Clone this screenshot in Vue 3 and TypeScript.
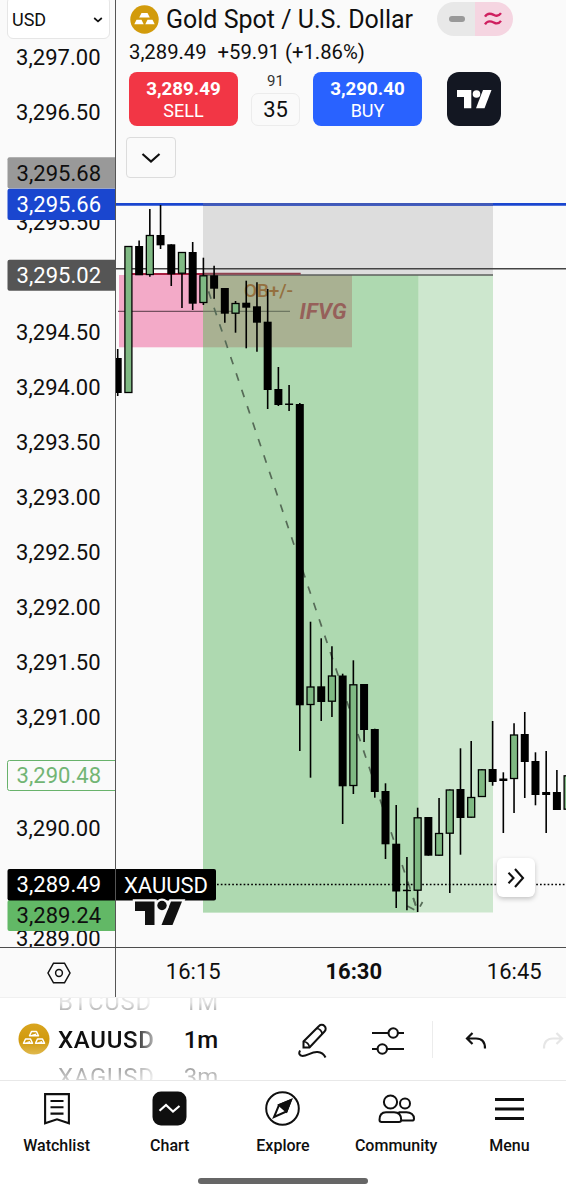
<script setup lang="ts">
interface Candle { x: number; high: number; low: number; top: number; bottom: number; up: boolean }
interface Tag { label: string; y: number; h: number; fill: string; ink: string; stroke?: string }

// high, low, body top, body bottom, direction (1 = rising)
const raw: [number, number, number, number, number][] = [
  [349, 396, 358, 393, 0], [246, 393, 246, 393, 1], [240.5, 275, 246, 275.3, 0], [209, 276.7, 235, 275, 1],
  [205, 249, 235, 245.3, 0], [244.3, 286, 244.3, 274.3, 0], [252, 308, 252, 273.7, 1], [242, 310, 252, 303.7, 0],
  [257.7, 305, 275.3, 303, 1], [265.7, 298.7, 275.3, 288.7, 0], [288, 322.7, 288, 313.7, 0], [301, 332.7, 303, 313.7, 1],
  [280.7, 348.3, 302.7, 307.7, 0], [282.3, 351.7, 306.3, 322.7, 0], [289, 409, 321.7, 390, 0], [367, 406, 389, 405, 0],
  [385, 411, 403.5, 405, 0], [403, 751, 404, 705.3, 0], [621.7, 777.7, 686.5, 705, 1], [638.3, 721, 686.3, 702, 0],
  [646.3, 717, 675.5, 701.7, 1], [673.7, 824, 675.5, 786.3, 0], [660.3, 794, 684.3, 786, 1], [684, 742, 684, 730, 0],
  [728.7, 797.7, 729, 792, 0], [783.3, 859, 791, 844.3, 0], [805, 908, 843.7, 891.5, 0], [857, 910.3, 889.7, 891.2, 0],
  [807.7, 912, 817.3, 890.7, 1], [817, 855.7, 817, 855.7, 0], [798, 855.7, 833, 855.7, 1], [789.5, 893, 789.5, 833.7, 1],
  [748.3, 854.7, 789, 818, 0], [741, 817.7, 797, 817.7, 1], [769.3, 797, 769.3, 797, 1], [721, 785.7, 769, 782, 0],
  [772.3, 833, 778.5, 781, 0], [723.3, 813, 734.5, 779, 1], [712, 798, 734, 762, 0], [752.3, 805.3, 761, 795, 0],
  [751, 833, 792, 795, 0], [770, 810, 792, 810, 0], [775.3, 809.7, 775.3, 809.7, 1],
]
const candles: Candle[] = raw.map((r, i) => ({
  x: 117.7 + 10.712 * i, high: r[0], low: r[1], top: r[2], bottom: r[3], up: r[4] === 1,
}))

const gridPrices = [3297, 3296.5, 3295.5, 3294.5, 3294, 3293.5, 3293, 3292.5, 3292, 3291.5, 3291, 3290, 3289]
const yOf = (price: number): number => 57 + (3297 - price) * 110.1
const format = (price: number): string => price.toLocaleString('en-US', { minimumFractionDigits: 2 })

const tags: Tag[] = [
  { label: '3,295.68', y: 157.3, h: 31.2, fill: '#999999', ink: '#0f0f0f' },
  { label: '3,295.66', y: 188.7, h: 31.3, fill: '#1a46cf', ink: '#ffffff' },
  { label: '3,295.02', y: 259.7, h: 31, fill: '#555555', ink: '#ffffff' },
  { label: '3,290.48', y: 760.5, h: 30, fill: '#fafafa', ink: '#72b574', stroke: '#68b26b' },
  { label: '3,289.24', y: 900, h: 31, fill: '#62b866', ink: '#0f0f0f' },
  { label: '3,289.49', y: 869, h: 31.5, fill: '#000000', ink: '#ffffff' },
]
const times = [
  { label: '16:15', strong: false }, { label: '16:30', strong: true }, { label: '16:45', strong: false },
]
</script>

<template>
  <main class="app">
    <section class="chart">
      <svg class="plot" width="566" height="947" viewBox="0 0 566 947">
        <defs>
          <clipPath id="pane"><rect x="116" y="0" width="450" height="947" /></clipPath>
        </defs>
        <g clip-path="url(#pane)">
          <rect x="203" y="204" width="290" height="71" fill="#dddddd" />
          <rect x="203" y="275" width="290" height="637.5" fill="#cde7ce" />
          <rect x="203" y="275" width="215.3" height="637.5" fill="#aed9b0" />
          <rect x="119" y="275" width="84" height="72.3" fill="#f3aac8" />
          <rect x="203" y="275" width="149" height="72.3" fill="#a9b192" />
          <path d="M116 204.4H566" stroke="#1a46cf" stroke-width="2.7" />
          <path d="M203 204.4H493" stroke="#4059b8" stroke-width="2.7" />
          <path d="M116 268.8H566" stroke="#444" stroke-width="1.6" />
          <path d="M203 275H493" stroke="#5c5f5c" stroke-width="1.5" />
          <path d="M132 274H203" stroke="#a81f40" stroke-width="2.2" />
          <path d="M203 273.7H300.7" stroke="#8f4350" stroke-width="2" />
          <path d="M118 311.4H203" stroke="#74505f" stroke-width="1.2" />
          <path d="M203 311.4H290" stroke="#6e7762" stroke-width="1.2" />
          <text x="244" y="296.5" class="zone-label ob" textLength="49">OB+/-</text>
          <text x="299.5" y="318.5" class="zone-label ifvg" textLength="47">IFVG</text>
          <path d="M203 275L418 912" stroke="#566b57" stroke-width="1.7" stroke-dasharray="7.8 9.5" />
          <path d="M407.3 906L414.3 909.7M413.3 898.3L415.7 905.7M422.5 902L420 906.7" stroke="#566b57" stroke-width="1.7" />
          <path d="M217 884.5H566" stroke="#000" stroke-width="1.6" stroke-dasharray="1.7 2.1" />
          <g v-for="(c, i) in candles" :key="i">
            <path :d="`M${c.x} ${c.high}V${c.low}`" stroke="#000" stroke-width="1.6" />
            <rect v-if="c.up" :x="c.x - 3.5" :y="c.top + .5" width="7" :height="c.bottom - c.top - 1" fill="#7fb983" stroke="#000" stroke-width="1.3" />
            <rect v-else :x="c.x - 4" :y="c.top" width="8" :height="c.bottom - c.top" />
          </g>
        </g>
        <g class="scale">
          <text v-for="p in gridPrices" :key="p" x="16" :y="yOf(p) + 7.8" textLength="84.5">{{ format(p) }}</text>
          <g v-for="t in tags" :key="t.label">
            <path :d="`M115.5 ${t.y}H9.5a2 2 0 0 0-2 2v${t.h - 4}a2 2 0 0 0 2 2H115.5z`" :fill="t.fill" :stroke="t.stroke ?? 'none'" />
            <text x="16.5" :y="t.y + t.h / 2 + 7.6" textLength="84.5" :fill="t.ink">{{ t.label }}</text>
          </g>
        </g>
        <path d="M116 869H214a2 2 0 0 1 2 2v27.500a2 2 0 0 1-2 2H116z" />
        <path d="M115.500 0V947" stroke="#555" />
        <text x="124" y="893" class="symbol" textLength="84">XAUUSD</text>
        <g transform="translate(135 901.5)" fill="#111" stroke="#fafafa" stroke-width="4.500" paint-order="stroke" stroke-linejoin="miter">
          <path d="M0 0H19.500V23.500H10V9.500H0z" />
          <path d="M36 0H47L37.500 23.500H26.500z" />
          <circle cx="27" cy="4" r="4.700" />
        </g>
      </svg>

      <div class="currency">
        <span>USD</span>
        <svg width="10" height="6" viewBox="0 0 10 6"><path d="M1.200 1L5 4.300L8.800 1" fill="none" stroke="#111" stroke-width="1.700" /></svg>
      </div>

      <div class="legend">
        <div class="title-row">
          <svg width="29" height="29" viewBox="0 0 29 29">
            <circle cx="14.500" cy="14.500" r="14.200" fill="#d29b0b" />
            <path d="M11.500 8h6l2.300 4.600h-10.600zM6.500 14.800h5l2.200 4.400h-9.400zM17.500 14.800h5l2.200 4.400h-9.400z" fill="#fff" />
          </svg>
          <h1>Gold Spot / U.S. Dollar</h1>
          <div class="pills">
            <span class="pill off"><i></i></span>
            <span class="pill on">
              <svg width="18" height="14" viewBox="0 0 18 14"><path d="M1 4.700C4-.3 8 2 10 3s5 1 7-1.800M1 12.300c3-5 7-2.700 9-1.700s5 1 7-1.800" fill="none" stroke="#cf1f5f" stroke-width="2.300" /></svg>
            </span>
          </div>
        </div>
        <div class="quote"><span>3,289.49</span><span>+59.91 (+1.86%)</span></div>
        <div class="trade-row">
          <button class="trade sell"><b>3,289.49</b><span>SELL</span></button>
          <div class="spread"><small>91</small><span>35</span></div>
          <button class="trade buy"><b>3,290.40</b><span>BUY</span></button>
          <div class="badge">
            <svg width="35" height="19" viewBox="0 0 35 19" fill="#fff">
              <path d="M0 0H14.300V18.300H7V7H0z" /><circle cx="19.500" cy="4" r="3.800" /><path d="M26 0H34.500L27.500 18.300H19z" />
            </svg>
          </div>
        </div>
        <button class="collapse">
          <svg width="20" height="12" viewBox="0 0 20 12"><path d="M1.500 2L10 9.500L18.500 2" fill="none" stroke="#0f0f0f" stroke-width="2.200" /></svg>
        </button>
      </div>

      <button class="jump">
        <svg width="18" height="20" viewBox="0 0 18 20"><path d="M1.500 4.800L6.500 10L1.500 15.200M8 1L16 10L8 19" fill="none" stroke="#111" stroke-width="2.100" /></svg>
      </button>

      <div class="time-axis">
        <div class="corner">
          <svg width="24" height="22" viewBox="0 0 24 22" fill="none" stroke="#111" stroke-width="1.500"><path d="M6.500 1.200H17.500L23 11L17.500 20.800H6.500L1 11z" /><circle cx="12" cy="11" r="3.400" /></svg>
        </div>
        <div class="times"><span v-for="t in times" :key="t.label" :class="{ strong: t.strong }">{{ t.label }}</span></div>
      </div>
    </section>

    <section class="toolbar">
      <svg class="coin" width="32" height="32" viewBox="0 0 32 32">
        <defs><linearGradient id="gold" x1="0" y1="0" x2="0" y2="1"><stop offset="0" stop-color="#d9a520" /><stop offset=".55" stop-color="#d0990c" /><stop offset="1" stop-color="#e0b94e" /></linearGradient></defs>
        <circle cx="16" cy="16" r="15.500" fill="url(#gold)" />
        <path d="M13.500 8.500h5l2 4.300h-9zM7.500 16h5l2 4.300h-9zM19.500 16h5l2 4.300h-9z" fill="#d0990c" stroke="#fff" stroke-width="1.500" stroke-linejoin="round" />
        <path d="M13 12l5-1.500.500 2zM7 19.500l5-1.500.500 2zM19 19.500l5-1.500.500 2z" fill="#fff" />
      </svg>
      <div class="wheel symbols"><span>BTCUSD</span><b>XAUUSD</b><span>XAGUSD</span></div>
      <div class="wheel frames"><span>1M</span><b>1m</b><span>3m</span></div>
      <svg class="tool draw" width="30" height="37" viewBox="0 0 30 37" fill="none" stroke="#111" stroke-width="2">
        <path d="M5.500 25.500V19.500L21 4a3.800 3.800 0 0 1 5.500 0a3.800 3.800 0 0 1 0 5.500L11.500 25.500z" /><path d="M18.500 6.500C21.500 6.500 24 9 24 12M5.500 19.500C9 20 11 22 11.500 25.500" stroke-width="1.700" />
        <path d="M2.200 28.500c-1.800 2.500-1 5.500 2.300 5.500c5 0 9-4.500 15-4c4.500.4 6.500 2 8 5.500" />
      </svg>
      <svg class="tool tune" width="32" height="28" viewBox="0 0 32 28" fill="none" stroke="#111" stroke-width="2.100">
        <path d="M0 6H16.500M26 6H32M0 22H5.500M15 22H32" /><circle cx="21.200" cy="6" r="4.700" /><circle cx="10.300" cy="22" r="4.700" />
      </svg>
      <i class="rule"></i>
      <svg class="tool undo" width="22" height="18" viewBox="0 0 22 18" fill="none" stroke="#111" stroke-width="2.200"><path d="M7.500 1L2 6.500L7.500 12M2 6.500H11c6 0 9 3.500 9 10" /></svg>
      <svg class="tool redo" width="22" height="18" viewBox="0 0 22 18" fill="none" stroke="#e6e6e6" stroke-width="2.200"><path d="M14.500 1L20 6.500L14.500 12M20 6.500H11c-6 0-9 3.500-9 10" /></svg>
    </section>

    <nav class="tabs">
      <a>
        <span class="icon"><svg width="26" height="32" viewBox="0 0 26 32" fill="none" stroke="#0f0f0f" stroke-width="2.100"><path d="M1.100 1.100H24.900V30.300L13 26.300L1.100 30.300z" /><path d="M6.500 8H19.500M6.500 14.300H19.500M6.500 20.600H19.500" /></svg></span>
        Watchlist
      </a>
      <a>
        <span class="icon"><svg width="35" height="35" viewBox="0 0 35 35"><rect x=".5" y=".5" width="34" height="34" rx="8.500" fill="#0f0f0f" /><path d="M7.500 19.800L14 14L21 20.500L27.500 15" fill="none" stroke="#fff" stroke-width="2.200" /></svg></span>
        Chart
      </a>
      <a>
        <span class="icon"><svg width="35" height="35" viewBox="0 0 35 35" fill="none" stroke="#0f0f0f" stroke-width="2"><circle cx="17.500" cy="17.500" r="16.300" /><path d="M26 9L21.500 20.500L9 26L14 14z" /><path d="M26 9L21.500 20.500L14 14z" fill="#0f0f0f" /></svg></span>
        Explore
      </a>
      <a>
        <span class="icon"><svg width="37" height="30" viewBox="0 0 37 30" fill="none" stroke="#0f0f0f" stroke-width="2"><circle cx="12.500" cy="8" r="6.600" /><circle cx="27" cy="9.500" r="5" /><path d="M1.500 25.800C1.500 20 4.500 18.200 8 18.200H16c4 0 7.200 2.300 7.200 7.600q0 2.200-2.200 2.200H3.700q-2.200 0-2.200-2.200zM20.500 18.200H28.500c4.500 0 7.500 2.800 7.500 6.200q0 2.200-2.200 2.200H23" /></svg></span>
        Community
      </a>
      <a>
        <span class="icon"><svg width="29" height="24" viewBox="0 0 29 24"><path d="M0 2.500H29M0 12H29M0 21.500H29" stroke="#0f0f0f" stroke-width="2.900" /></svg></span>
        Menu
      </a>
    </nav>
    <div class="home-bar"></div>
  </main>
</template>

<style>
html, body { margin: 0; background: #fff; }
</style>
<style scoped>
.app { width: 566px; height: 1200px; overflow: hidden; position: relative; background: #fff; color: #0f0f0f; font-family: Roboto, "Liberation Sans", sans-serif; display: flex; flex-direction: column; }
.app svg { display: block; flex: none; }
button { font: inherit; padding: 0; box-sizing: border-box; }
.chart { position: relative; height: 998px; flex: none; background: #fafafa; }
.scale { font-size: 22px; fill: #0f0f0f; }
.symbol { font-size: 22px; fill: #fff; }
.zone-label { font-weight: 500; }
.ob { font-size: 19px; fill: #94703f; }
.ifvg { font-size: 22px; font-weight: 700; font-style: italic; fill: #96605a; }
.currency { position: absolute; left: 7px; top: -4px; width: 103px; height: 43px; box-sizing: border-box; border: 1px solid #e6e6e6; border-radius: 6px; background: #fff; display: flex; align-items: center; justify-content: space-between; padding: 4px 6px 0 5px; font-size: 18px; }
.currency span { margin-left: -1px; }
.legend { position: absolute; left: 126px; top: 1px; width: 440px; }
.title-row { display: flex; align-items: center; height: 36px; padding-left: 4px; }
h1 { margin: 0 0 0 7px; font-size: 25px; font-weight: 400; width: 249px; white-space: nowrap; line-height: 37px; }
.pills { display: flex; margin-left: 22px; }
.pill { width: 38px; height: 34px; display: flex; align-items: center; justify-content: center; }
.off { background: #e8e8e8; border-radius: 17px 0 0 17px; }
.off i { width: 16px; height: 6px; border-radius: 3px; background: #999; margin-left: 2px; }
.on { background: #f5d5e1; border-radius: 0 17px 17px 0; }
.on svg { margin-right: 3px; }
.quote { display: flex; gap: 11px; height: 30px; line-height: 30px; padding-left: 3px; font-size: 20.250px; white-space: nowrap; }
.trade-row { display: flex; height: 54px; margin: 5px 0 0 3px; }
.trade { width: 109px; height: 54px; border: 0; border-radius: 8px; color: #fff; display: flex; flex-direction: column; align-items: center; justify-content: center; padding-top: 2px; font-size: 18px; line-height: 21px; }
.trade b { font-size: 18.800px; font-weight: 700; }
.sell { background: #f23645; }
.buy { background: #2962ff; }
.spread { width: 49px; margin: 0 13px; display: flex; flex-direction: column; align-items: center; }
.spread small { font-size: 15px; line-height: 18px; height: 21px; color: #333; }
.spread span { box-sizing: border-box; width: 49px; height: 33px; border: 1px solid #ececec; border-radius: 7px; text-align: center; font-size: 22px; line-height: 31px; }
.badge { width: 54px; height: 54px; border-radius: 12px; background: #131722; margin-left: 25px; display: flex; align-items: center; justify-content: center; }
.collapse { display: flex; align-items: center; justify-content: center; width: 50px; height: 41px; margin-top: 11px; border: 1px solid #dcdcdc; border-radius: 4px; background: #fafafa; }
.jump { position: absolute; left: 497px; top: 858px; width: 38px; height: 39px; border: 0; border-radius: 6px; background: #fff; box-shadow: 0 2px 5px rgba(0,0,0,.22); display: flex; align-items: center; justify-content: center; }
.time-axis { position: absolute; left: 0; right: 0; top: 947px; height: 51px; display: flex; box-sizing: border-box; border-top: 1px solid #4d4d4d; border-bottom: 1px solid #f0f0f0; overflow: hidden; }
.corner { flex: none; width: 116px; border-right: 1px solid #555; display: flex; align-items: center; justify-content: center; padding-left: 3px; box-sizing: border-box; }
.times { width: 482px; flex: none; display: flex; margin-left: -3px; font-size: 22px; line-height: 48px; }
.times span { width: 160.500px; text-align: center; }
.strong { font-weight: 700; }
.toolbar { height: 83px; flex: none; box-sizing: border-box; border-bottom: 1px solid #e8e8e8; display: flex; align-items: center; padding-left: 18px; overflow: hidden; }
.wheel { display: flex; flex-direction: column; justify-content: center; height: 82px; box-sizing: border-box; padding-top: 3px; font-size: 24px; line-height: 37.500px; color: #a8a8a8; overflow: hidden; }
.wheel b { font-weight: 500; color: #0f0f0f; }
.wheel span, .wheel b { flex: none; }
.wheel span:first-child { background: linear-gradient(#e4e4e4 48%, #9c9c9c 82%); -webkit-background-clip: text; background-clip: text; color: transparent; }
.wheel span:last-child { background: linear-gradient(#9c9c9c 20%, #e0e0e0 65%); -webkit-background-clip: text; background-clip: text; color: transparent; }
.symbols { width: 98px; margin-left: 8px; letter-spacing: .7px; -webkit-mask-image: linear-gradient(90deg, #000 76%, rgba(0,0,0,.3) 98%); mask-image: linear-gradient(90deg, #000 76%, rgba(0,0,0,.3) 98%); }
.frames { width: 40px; margin-left: 25px; text-align: center; }
.tool { margin-top: 3px; }
.draw { margin-left: 77px; }
.tune { margin-left: 44px; }
.rule { width: 1px; height: 37px; margin-left: 28px; background: #ececec; }
.undo { margin-left: 32px; }
.redo { margin-left: 55px; }
.tabs { display: grid; grid-template-columns: repeat(5, 113.200px); height: 90px; flex: none; }
.tabs a { display: flex; flex-direction: column; align-items: center; font-size: 16px; font-weight: 500; line-height: 20px; }
.icon { height: 55px; display: flex; align-items: center; }
.home-bar { width: 170px; height: 6px; border-radius: 3px; background: #666; margin: 7px auto 0; }
</style>
